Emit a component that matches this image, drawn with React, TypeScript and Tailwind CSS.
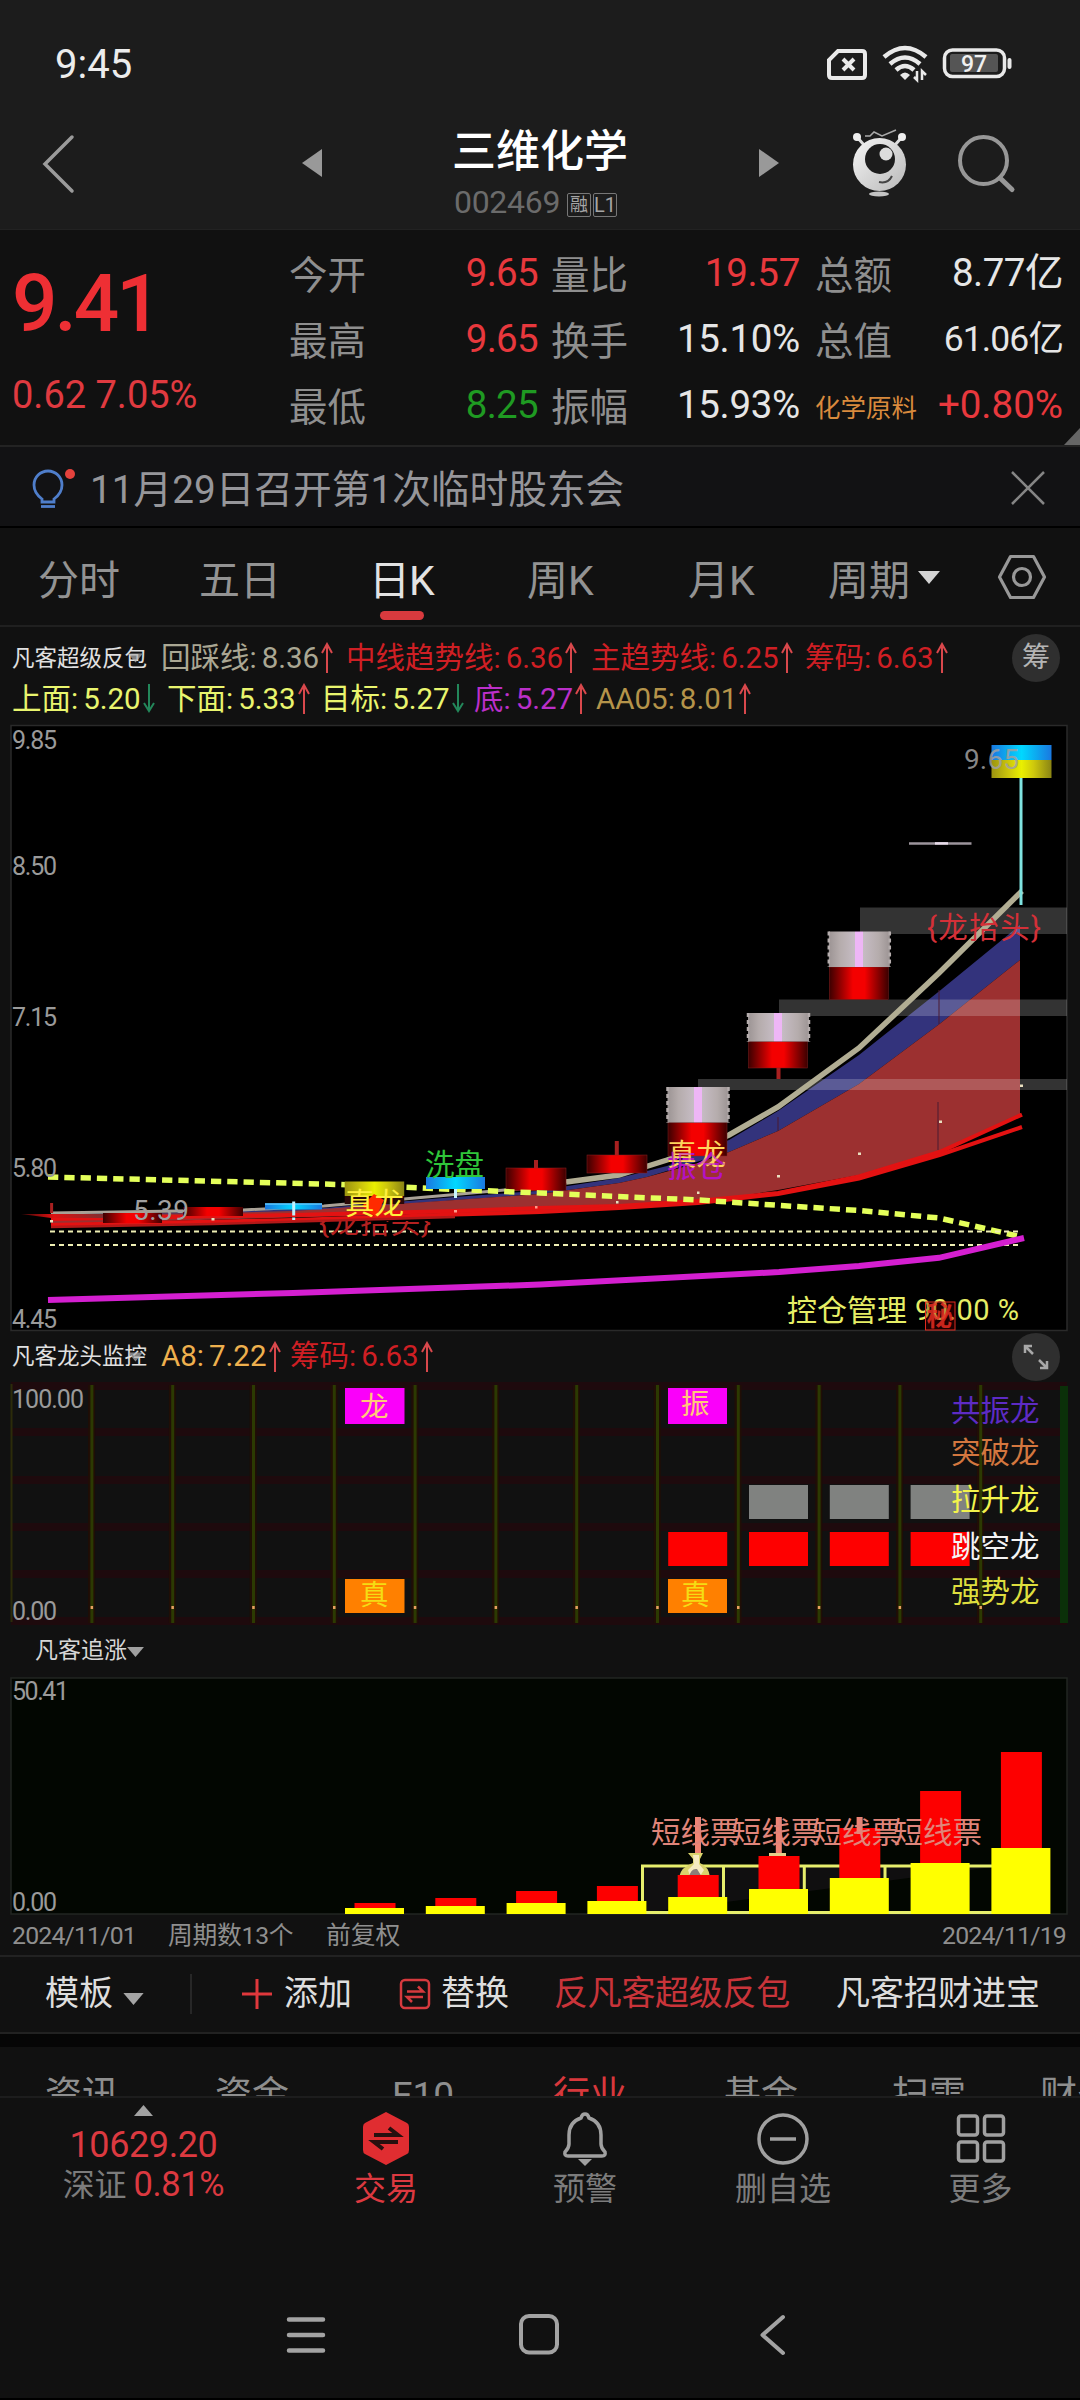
import type { ReactNode } from "react";

const STEP = 80.8;

const quotes = [
  [
    { label: "今开", value: "9.65", color: "text-[#e8383d]" },
    { label: "最高", value: "9.65", color: "text-[#e8383d]" },
    { label: "最低", value: "8.25", color: "text-[#1f9a22]" },
  ],
  [
    { label: "量比", value: "19.57", color: "text-[#e8383d]" },
    { label: "换手", value: "15.10%", color: "text-[#e6e6e6]" },
    { label: "振幅", value: "15.93%", color: "text-[#e6e6e6]" },
  ],
];

const mainIndicators = [
  { label: "回踩线", value: "8.36", color: "text-[#aaa793]", up: true, width: "w-[185px]" },
  { label: "中线趋势线", value: "6.36", color: "text-[#cf1f24]", up: true, width: "w-[245px]" },
  { label: "主趋势线", value: "6.25", color: "text-[#cf1f24]", up: true, width: "w-[214px]" },
  { label: "筹码", value: "6.63", color: "text-[#cf1f24]", up: true, width: "w-[160px]" },
];

const subIndicators = [
  { label: "上面", value: "5.20", color: "text-[#e9f56e]", up: false, width: "w-[155px]" },
  { label: "下面", value: "5.33", color: "text-[#e9f56e]", up: true, width: "w-[154px]" },
  { label: "目标", value: "5.27", color: "text-[#e9f56e]", up: false, width: "w-[153px]" },
  { label: "底", value: "5.27", color: "text-[#bb2fc9]", up: true, width: "w-[122px]" },
  { label: "AA05", value: "8.01", color: "text-[#b5944a]", up: true, width: "w-[170px]" },
];

const dragonIndicators = [
  { label: "A8", value: "7.22", color: "text-[#eeb04e]", up: true, width: "w-[129px]" },
  { label: "筹码", value: "6.63", color: "text-[#cf1f24]", up: true, width: "w-[160px]" },
];

type Indicator = (typeof mainIndicators)[number];

function Arrow({ up }: { up: boolean }) {
  return (
    <svg width="14" height="32" viewBox="0 0 14 32" fill="none" strokeWidth="2" className="ml-px shrink-0">
      {up ? (
        <path d="M7 31V2M2 11L7 2L12 11" stroke="#d9484c" />
      ) : (
        <path d="M7 1V28M2 20L7 28L12 20" stroke="#23875a" />
      )}
    </svg>
  );
}

function IndicatorItem({ item }: { item: Indicator }) {
  return (
    <div className={`flex shrink-0 items-center text-[29.5px] ${item.color} ${item.width}`}>
      <span>{item.label}:</span>
      <span className="ml-[5px]">{item.value}</span>
      <Arrow up={item.up} />
    </div>
  );
}

function Caret({ className }: { className: string }) {
  return (
    <svg viewBox="0 0 22 13" className={className}>
      <path d="M0 0H22L11 13Z" fill="currentColor" />
    </svg>
  );
}

function StatusBar() {
  return (
    <div className="flex h-[100px] items-end justify-between pr-[68px] pl-[55px]">
      <span className="mb-[12px] text-[40px] leading-[46px] text-[#ececec]">9:45</span>
      <svg width="186" height="44" viewBox="826 42 186 44" className="mb-[14px]" fill="none" stroke="#e9e9e9">
        <path d="M838 51H862Q865 51 865 54V75Q865 78 862 78H832Q829 78 829 75V60Z" strokeWidth="4" />
        <path d="M843 59L854 70M854 59L843 70" strokeWidth="4" />
        <path d="M884 57Q905 39 926 57M890 64Q905 51 920 64M896 70Q905 62 914 70" strokeWidth="4.5" />
        <path d="M900 75Q905 70 910 75L905 80Z" fill="#e9e9e9" stroke="none" />
        <path d="M917 71V80L914 77M922 80V71L926 75" strokeWidth="2.5" />
        <rect x="944.5" y="50" width="60" height="26.5" rx="8" strokeWidth="3.5" />
        <rect x="950" y="54" width="48" height="18" rx="2" fill="#555" stroke="none" />
        <path d="M1009.5 60V67" strokeWidth="4" strokeLinecap="round" />
        <text x="974" y="72" fontSize="23" fontWeight="500" textAnchor="middle" fill="#f0f0f0" stroke="none">
          97
        </text>
      </svg>
    </div>
  );
}

function Robot() {
  return (
    <svg width="60" height="72" viewBox="849 128 60 72" fill="none">
      <defs>
        <linearGradient id="robot" x1="0" y1="0" x2="1" y2="1">
          <stop offset="0" stopColor="#f5f5f5" />
          <stop offset="1" stopColor="#b9b9b9" />
        </linearGradient>
      </defs>
      <path d="M857 137L864 145M902 137L895 145" stroke="#ddd" strokeWidth="3" />
      <circle cx="857" cy="137" r="4" fill="#eee" />
      <circle cx="902" cy="137" r="4" fill="#eee" />
      <path d="M865 136L870 136L874 132L882 136L896 130" stroke="#aaa" strokeWidth="1.5" />
      <circle cx="879.5" cy="164.5" r="26.5" fill="url(#robot)" />
      <circle cx="880" cy="159" r="15" fill="#1c1c1c" />
      <circle cx="886" cy="154" r="6.5" fill="#dcdcdc" />
      <path d="M879 182Q888 184 892 176" stroke="#444" strokeWidth="2" />
      <ellipse cx="879" cy="194" rx="10" ry="2.5" fill="#c4c4c4" />
    </svg>
  );
}

function Header() {
  return (
    <div className="flex h-[130px] items-start pl-[42px] *:shrink-0">
      <svg width="34" height="60" viewBox="0 0 34 60" className="mt-[34px]" fill="none" stroke="#9b9b9b" strokeWidth="3.5">
        <path d="M30 3L3 30L30 57" strokeLinecap="round" />
      </svg>
      <svg width="20" height="28" viewBox="0 0 20 28" className="mt-[49px] ml-[226px]">
        <path d="M20 0V28L0 14Z" fill="#999" />
      </svg>
      <div className="ml-[108px] flex w-[220px] flex-col items-center pt-[24px]">
        <h1 className="text-[44px] leading-[56px] font-medium text-white">三维化学</h1>
        <div className="mt-[4px] flex w-[172px] items-center text-[#6b6b6b]">
          <span className="w-[108px] text-[32px] leading-[36px] tracking-[-0.3px]">002469</span>
          <span className="mt-[5px] ml-[5px] flex h-[24px] w-[24px] items-center justify-center rounded-[2px] border border-[#777] text-[18px] leading-none text-[#a5a5a5]">
            融
          </span>
          <span className="mt-[5px] ml-[2px] flex h-[24px] w-[24px] items-center justify-center rounded-[2px] border border-[#777] text-[20px] leading-none text-[#a5a5a5]">
            L1
          </span>
        </div>
      </div>
      <svg width="20" height="28" viewBox="0 0 20 28" className="mt-[49px] ml-[109px]">
        <path d="M0 0V28L20 14Z" fill="#999" />
      </svg>
      <div className="mt-[28px] ml-[70px]">
        <Robot />
      </div>
      <svg width="64" height="62" viewBox="954 132 64 62" className="mt-[32px] ml-[45px]" fill="none" stroke="#979797" strokeWidth="4">
        <circle cx="983.5" cy="160.5" r="23.5" />
        <path d="M1000 178L1012 189.5" strokeWidth="5" strokeLinecap="round" />
      </svg>
    </div>
  );
}

function QuotePanel() {
  return (
    <div className="relative flex h-[217px] border-b-2 border-[#232323] bg-[#111111]">
      <div className="flex w-[289px] flex-col pt-[27px] pl-[12px] text-[#ee2f34]">
        <span className="text-[80px] leading-[94px] font-medium tracking-[-3px]">9.41</span>
        <span className="mt-[21px] text-[38px] leading-[46px] whitespace-nowrap text-[#e03a40]">0.62 7.05%</span>
      </div>
      <div className="flex w-[249px] flex-col pt-[13px]">
        {quotes[0].map((q) => (
          <div key={q.label} className="flex h-[66px] items-center justify-between text-[38.5px]">
            <span className="text-[#8f8f8f]">{q.label}</span>
            <span className={`mb-1.5 tracking-[-0.7px] ${q.color}`}>{q.value}</span>
          </div>
        ))}
      </div>
      <div className="ml-[13px] flex w-[249px] flex-col pt-[13px]">
        {quotes[1].map((q) => (
          <div key={q.label} className="flex h-[66px] items-center justify-between text-[38.5px]">
            <span className="text-[#8f8f8f]">{q.label}</span>
            <span className={`mb-1.5 tracking-[-0.3px] ${q.color}`}>{q.value}</span>
          </div>
        ))}
      </div>
      <div className="ml-[15px] flex w-[248px] flex-col pt-[13px] text-[38.5px] text-[#e6e6e6]">
        <div className="flex h-[66px] items-center justify-between">
          <span className="text-[#8f8f8f]">总额</span>
          <span className="mb-1.5 tracking-[-0.5px]">8.77亿</span>
        </div>
        <div className="flex h-[66px] items-center justify-between">
          <span className="text-[#8f8f8f]">总值</span>
          <span className="mb-1 text-[35.5px] tracking-[-0.9px]">61.06亿</span>
        </div>
        <div className="flex h-[66px] items-center justify-between">
          <span className="text-[25.5px] text-[#d98a3d]">化学原料</span>
          <span className="mb-1.5 text-[#e8383d]">+0.80%</span>
        </div>
      </div>
      <svg width="16" height="17" className="absolute right-0 bottom-0">
        <path d="M16 0V17H0Z" fill="#666" />
      </svg>
    </div>
  );
}

function Notice() {
  return (
    <div className="flex h-[81px] items-center border-b-2 border-black bg-[#121214] pt-[2px] pr-[34px] pl-[30px]">
      <svg width="48" height="50" viewBox="30 460 48 50" fill="none" stroke="#4f7ecb" strokeWidth="2.8">
        <path d="M42 496Q34 490 34 482A14 14 0 0 1 62 482Q62 490 54 496V499H42Z" />
        <path d="M41 503.5H55" />
        <circle cx="70" cy="471" r="5" fill="#e5423d" stroke="none" />
      </svg>
      <span className="mt-[6px] ml-[12px] text-[38.7px] text-[#96969a]">11月29日召开第1次临时股东会</span>
      <svg width="36" height="36" viewBox="0 0 36 36" className="ml-auto" stroke="#858585" strokeWidth="2.5">
        <path d="M2 2L34 34M34 2L2 34" />
      </svg>
    </div>
  );
}

function PeriodTabs() {
  return (
    <div className="flex h-[99px] border-b-2 border-[#202020] pt-[21px] text-[41px] leading-[64px] text-[#939393]">
      <span className="ml-[38px] w-[161px]">分时</span>
      <span className="w-[170px]">五日</span>
      <div className="flex w-[158px] flex-col">
        <span className="tracking-[-1px] text-[#e3e3e3]">日K</span>
        <span className="mt-[-2px] ml-[11px] h-[9px] w-[44px] rounded-full bg-[#d93a3e]" />
      </div>
      <span className="w-[161px]">周K</span>
      <span className="w-[140px]">月K</span>
      <span>周期</span>
      <Caret className="mt-[22px] ml-[8px] h-[13px] w-[22px] text-[#d4d4d4]" />
      <svg width="50" height="46" viewBox="0 0 50 46" className="mt-[5px] ml-[57px]" fill="none" stroke="#989898" strokeWidth="3.2">
        <path d="M13.500 2.500H36.500L47.500 23L36.500 43.500H13.500L2.500 23Z" strokeLinejoin="round" />
        <circle cx="25" cy="23" r="8.5" />
      </svg>
    </div>
  );
}

function RoundButton({ children }: { children: ReactNode }) {
  return (
    <div className="flex h-[48px] w-[48px] items-center justify-center rounded-full bg-[#2f2f2f] text-[28px] text-[#b5b5b5]">
      {children}
    </div>
  );
}

function IndicatorBar() {
  return (
    <div className="h-[95px] leading-[42px] whitespace-nowrap">
      <div className="flex h-[50px] items-center pt-[11px] pl-[12px]">
        <div className="flex w-[149px] items-center text-[22.5px] text-[#e0e0e0]">
          凡客超级反包
          <Caret className="-ml-[19px] h-[10px] w-[15px] shrink-0 text-[#b0b0b0]/70" />
        </div>
        {mainIndicators.map((item) => (
          <IndicatorItem key={item.label} item={item} />
        ))}
        <div className="ml-[47px]">
          <RoundButton>筹</RoundButton>
        </div>
      </div>
      <div className="flex h-[44px] items-center pl-[12px]">
        {subIndicators.map((item) => (
          <IndicatorItem key={item.label} item={item} />
        ))}
      </div>
    </div>
  );
}

// limit-up candles: silver cap on top of a red body
const limitUp = [
  { x: 698, top: 1087, mid: 1122.5, bottom: 1156 },
  { x: 778.5, top: 1013, mid: 1041.5, bottom: 1068 },
  { x: 859.3, top: 931.5, mid: 967, bottom: 999.5 },
];

function MainChart() {
  return (
    <svg width="1080" height="612" viewBox="0 722 1080 612" className="block shrink-0">
      <defs>
        <linearGradient id="redBody">
          <stop offset="0" stopColor="#3c0000" />
          <stop offset="0.4" stopColor="#f40000" />
          <stop offset="0.6" stopColor="#f40000" />
          <stop offset="1" stopColor="#3c0000" />
        </linearGradient>
        <linearGradient id="blueBody">
          <stop offset="0" stopColor="#1a78e0" />
          <stop offset="0.5" stopColor="#00d8ff" />
          <stop offset="1" stopColor="#1a78e0" />
        </linearGradient>
        <linearGradient id="yellowBody">
          <stop offset="0" stopColor="#9b9310" />
          <stop offset="0.3" stopColor="#cfc90c" />
          <stop offset="0.5" stopColor="#eaf000" />
          <stop offset="0.7" stopColor="#cfc90c" />
          <stop offset="1" stopColor="#8a8414" />
        </linearGradient>
        <linearGradient id="silver">
          <stop offset="0" stopColor="#9c9494" />
          <stop offset="0.18" stopColor="#b5acac" />
          <stop offset="0.43" stopColor="#c6bcc4" />
          <stop offset="0.43" stopColor="#eeb6f6" />
          <stop offset="0.56" stopColor="#eeb6f6" />
          <stop offset="0.56" stopColor="#c6bcc4" />
          <stop offset="0.82" stopColor="#b5acac" />
          <stop offset="1" stopColor="#9c9494" />
        </linearGradient>
        <linearGradient id="wing">
          <stop offset="0" stopColor="#400808" />
          <stop offset="0.4" stopColor="#e01010" />
          <stop offset="1" stopColor="#803030" />
        </linearGradient>
      </defs>
      <rect x="11" y="725.5" width="1056" height="605" fill="#000" stroke="#2a2a2a" strokeWidth="1.5" />

      {/* trend bands */}
      <path
        d="M51 1214L213 1212L324 1208L455 1197L536 1191L619 1178L667 1166L698 1153L729 1140L778 1111L859 1055L939.500 991L1020 925L1020 960L939.500 1024L859 1084L778 1131L729 1152L647 1177L619 1183L540 1194L293 1212L51 1218Z"
        fill="#33337c"
      />
      <path
        d="M51 1215L213 1213L293 1211L455 1200L540 1194L619 1183L647 1177L698 1163L729 1152L778 1131L859 1084L939.500 1024L1020 960V1115L939.500 1151L859 1175L778 1190L698 1203L540 1211L51 1224Z"
        fill="#9c3030"
      />

      {/* gap zones */}
      <g fill="#fff" fillOpacity="0.2">
        <rect x="860" y="907.5" width="207" height="26.5" />
        <rect x="779" y="999.5" width="288" height="16.5" />
        <rect x="698" y="1079" width="369" height="11" />
      </g>

      <path
        d="M51 1213L243 1210L324 1206L455 1194.500L516 1189L566 1181.500L619 1174.700L667 1160L698 1149"
        fill="none"
        stroke="#a9a196"
        strokeWidth="3"
      />
      <path
        d="M566 1182L619 1175L667 1160L698 1149L729 1135L778 1107L859 1048L939 973L1022 891"
        fill="none"
        stroke="#b1ad93"
        strokeWidth="5.5"
      />

      <g fill="none" stroke="#e31212">
        <path
          d="M51 1219L293 1215L455 1211L540 1208L619 1206L698 1201L778 1193L859 1176.500L939.500 1152L1022 1114.600"
          strokeWidth="4"
        />
        <path
          d="M51 1225L293 1220L455 1214.500L540 1212L619 1208L698 1203L778 1194L859 1178.500L939.500 1155L1022 1127"
          strokeWidth="4"
        />
        <path d="M51 1227L213 1224L455 1217" strokeWidth="2.5" stroke="#b31818" />
        <path d="M778 1131V1117M939 1024V990M938 1150V1102" strokeWidth="1" stroke="#4a1a30" />
      </g>

      {/* candles */}
      <path d="M21 1214H103V1218H51Z" fill="url(#wing)" />
      <path d="M51.600 1203V1213" stroke="#a82020" strokeWidth="3" />
      <rect x="103" y="1213" width="59" height="10" fill="url(#redBody)" />
      <rect x="183" y="1207" width="60" height="9" fill="url(#redBody)" />
      <rect x="265" y="1203.5" width="57" height="6" fill="url(#blueBody)" />
      <path d="M265 1204H322" stroke="#5cc8ff" strokeWidth="1.5" />
      <path d="M293.700 1201.500V1220" stroke="#bff2ff" strokeWidth="3" strokeDasharray="14 2" />
      <rect x="506" y="1168" width="60" height="22.5" fill="url(#redBody)" stroke="#902020" strokeWidth="0.5" />
      <path d="M536 1160V1168" stroke="#a82020" strokeWidth="4" />
      <rect x="587" y="1155" width="60" height="18" fill="url(#redBody)" stroke="#902020" strokeWidth="0.5" />
      <path d="M616.800 1141V1155" stroke="#a82020" strokeWidth="4" />
      <path d="M778.500 1068V1079" stroke="#a82020" strokeWidth="4" />
      {limitUp.map((c) => (
        <g key={c.x}>
          <rect x={c.x - 30} y={c.mid} width="59" height={c.bottom - c.mid} fill="url(#redBody)" stroke="#802020" strokeWidth="0.5" />
          <rect x={c.x - 30.5} y={c.top} width="61" height={c.mid - c.top} fill="url(#silver)" />
          <path
            d={`M${c.x - 30.5} ${c.top}V${c.mid}M${c.x + 30.5} ${c.top}V${c.mid}`}
            stroke="#b5adad"
            strokeWidth="2.5"
            strokeDasharray="4 3"
          />
        </g>
      ))}
      <path d="M909 843.400H971.500" stroke="#9c949c" strokeWidth="2.5" />
      <path d="M935 843.400H948" stroke="#e8dcea" strokeWidth="2.5" />
      <path d="M1021 778V905" stroke="#7fe3e0" strokeWidth="3" />
      <rect x="991.5" y="745" width="60" height="15" fill="url(#blueBody)" />
      <rect x="991.5" y="760" width="60" height="18" fill="url(#yellowBody)" />

      {/* dashed levels */}
      <path
        d="M48 1177L340 1184.500L540 1193L698 1200L781 1205.500L859 1210.500L939 1218L1022 1237"
        fill="none"
        stroke="#e4ff5a"
        strokeWidth="5.5"
        strokeDasharray="10.3 6"
      />
      <path d="M50 1231.600H1022M50 1245H1022" stroke="#efefb4" strokeWidth="2" strokeDasharray="5 4" />
      <path d="M48 1300L293 1293L540 1284.600L779 1272L859 1266L939 1257.800L1024 1238" fill="none" stroke="#d41fd0" strokeWidth="6" />

      <rect x="344.7" y="1181.5" width="59.5" height="14.5" fill="url(#yellowBody)" />
      <rect x="344.7" y="1196" width="59.5" height="8" fill="#2a0808" />
      <path d="M374 1194L384 1200L376 1217L362 1206Z" fill="#ff2a00" />
      <rect x="426" y="1177" width="59" height="12" fill="url(#blueBody)" />
      <path d="M455.500 1189V1198" stroke="#c8f4ff" strokeWidth="3" />
      <g fill="#e9e0c0">
        <rect x="50" y="1220" width="3" height="2.5" />
        <rect x="211.5" y="1218" width="3" height="2.5" />
        <rect x="535" y="1206" width="2.5" height="2.5" fill="#ff9a8a" />
        <rect x="454" y="1210" width="3" height="2.5" fill="#ff9a8a" />
        <rect x="616" y="1201" width="2.5" height="2.5" />
        <rect x="697" y="1191.5" width="2.5" height="2.5" />
        <rect x="777" y="1175" width="3" height="2.5" />
        <rect x="858" y="1152.5" width="3" height="2.5" />
        <rect x="939" y="1120.5" width="3" height="2.5" />
        <rect x="1020" y="1084.5" width="3" height="2.5" />
      </g>

      {/* axis labels */}
      <g fill="#9a9a9a" fontSize="25">
        <text x="12" y="748.5" textLength="45">9.85</text>
        <text x="12" y="875" textLength="45">8.50</text>
        <text x="12" y="1026" textLength="45">7.15</text>
        <text x="12" y="1177" textLength="45">5.80</text>
        <text x="12" y="1328" textLength="45">4.45</text>
      </g>
      <g fontSize="28" fill="#a0a0a0">
        <text x="133" y="1220" textLength="56">5.39</text>
        <text x="964" y="769" textLength="55" fillOpacity="0.85">9.65</text>
      </g>

      {/* signals */}
      <clipPath id="lower">
        <rect x="310" y="1221" width="130" height="20" />
      </clipPath>
      <g fontSize="29.5">
        <text x="425" y="1175" fill="#2fc63a">洗盘</text>
        <text x="319" y="1233" fill="#b32020" clipPath="url(#lower)" textLength="112">{"{龙抬头}"}</text>
        <text x="345" y="1214" fill="#fff03c">真龙</text>
        <text x="667" y="1177" fill="#b512c4">振仓</text>
        <text x="667" y="1165" fill="#ffd45c">真龙</text>
        <text x="667" y="1177" fill="#b512c4" fillOpacity="0.5">振仓</text>
        <text x="927" y="938" fill="#d43038" textLength="114">{"{龙抬头}"}</text>
      </g>
      <g fontSize="30" fill="#e6ee66">
        <text x="787" y="1321">控仓管理</text>
        <text x="915" y="1320" fontSize="29" textLength="104">90.00 %</text>
      </g>
      <rect x="925.5" y="1302" width="29.5" height="28" fill="#500" fillOpacity="0.35" stroke="#e02a20" strokeWidth="1" />
      <text x="926.5" y="1326" fontSize="27" fontWeight="700" fill="#e82c22" fillOpacity="0.85">秘</text>
    </svg>
  );
}

const dragonLegend = [
  { name: "共振龙", y: 1421, color: "#5d2bc4" },
  { name: "突破龙", y: 1463, color: "#d3773f" },
  { name: "拉升龙", y: 1510, color: "#f2f24c" },
  { name: "跳空龙", y: 1557, color: "#f4f4f4" },
  { name: "强势龙", y: 1602, color: "#dede3e" },
];

function DragonChart() {
  const cols = Array.from({ length: 12 }, (_, i) => 91.6 + i * STEP);
  return (
    <svg width="1080" height="250" viewBox="0 1380 1080 250" className="block shrink-0">
      {[1386, 1432, 1480, 1527, 1574, 1621].map((y) => (
        <rect key={y} x="11" y={y - 4} width="1056" height="8" fill="#1e0a0d" />
      ))}
      {cols.map((x) => (
        <g key={x}>
          <rect x={x - 3.5} y="1385" width="7" height="238" fill="#200e06" />
          <rect x={x - 1.2} y="1385" width="3" height="238" fill="#2c3a02" />
          <rect x={x - 1} y="1606" width="2.5" height="3" fill="#e8a060" />
        </g>
      ))}
      <rect x="10.5" y="1384" width="2" height="238" fill="#2c2c0a" />
      <rect x="1060" y="1386" width="8" height="237" fill="#0b3009" />
      {[0, 1, 2].map((i) => (
        <rect key={i} x={749 + i * STEP} y="1485" width="59" height="34" fill="#808280" />
      ))}
      {[0, 1, 2, 3].map((i) => (
        <rect key={i} x={668.2 + i * STEP} y="1532" width="59" height="34" fill="#fe0000" />
      ))}
      <g>
        <rect x="345" y="1388" width="59.5" height="36" fill="#fa00fa" />
        <rect x="668" y="1388" width="59" height="36" fill="#fa00fa" />
        <rect x="345" y="1579" width="59.5" height="34" fill="#ff8000" />
        <rect x="668" y="1579" width="59" height="34" fill="#ff8000" />
      </g>
      <g fontSize="28.5">
        <text x="360" y="1417" fill="#ffc878">龙</text>
        <text x="681" y="1414" fill="#ffc878">振</text>
        <text x="360" y="1605" fill="#f5dc14">真</text>
        <text x="681" y="1605" fill="#f5dc14">真</text>
      </g>
      <g fontSize="29.5">
        {dragonLegend.map((d) => (
          <text key={d.name} x="951" y={d.y} fill={d.color}>
            {d.name}
          </text>
        ))}
      </g>
      <g fontSize="25" fill="#9a9a9a">
        <text x="12" y="1408" textLength="72">100.00</text>
        <text x="12" y="1620" textLength="45">0.00</text>
      </g>
    </svg>
  );
}

const bars = [
  { red: 1903, yellow: 1908 },
  { red: 1898, yellow: 1906 },
  { red: 1891, yellow: 1903 },
  { red: 1886, yellow: 1901 },
  { red: 1875, yellow: 1897 },
  { red: 1856, yellow: 1889 },
  { red: 1828, yellow: 1878 },
  { red: 1791, yellow: 1863 },
  { red: 1752, yellow: 1848 },
];

function ChaseChart() {
  return (
    <svg width="1080" height="244" viewBox="0 1673 1080 244" className="block shrink-0">
      <rect x="11" y="1678" width="1056" height="236" fill="#020601" stroke="#222622" strokeWidth="1.5" />
      <path
        d="M642.500 1913V1866H1000M723.500 1866V1913M804.300 1866V1913M885 1866V1913M642 1912.500H1000"
        fill="#100f10"
        stroke="#e6ee6c"
        strokeWidth="3"
      />
      <path d="M688 1853H703L700 1859L700 1863Q709 1867 710 1877H679Q681 1867 693 1863L693 1859Z" fill="#d9d36c" />
      <path d="M693 1855H699V1864L704 1870L700 1876H690L688 1870L694 1864Z" fill="#f6ecc0" />
      <path d="M689 1877Q691 1868 697 1869L702 1877Z" fill="#8a8078" />
      <rect x="769" y="1853" width="17" height="4" fill="#e6d08a" />
      {bars.map((b, i) => (
        <g key={i}>
          <rect x={354.5 + i * STEP} y={b.red} width="41" height={1914 - b.red} fill="#fd0000" />
          <rect x={345 + i * STEP} y={b.yellow} width="59" height={1914 - b.yellow} fill="#ffff00" />
        </g>
      ))}
      <path d="M698 1817V1853M778.800 1817V1853M859.600 1817V1834" stroke="#f08474" strokeWidth="6" />
      <g fontSize="29.5" fill="#e0857a">
        {[0, 1, 2, 3].map((i) => (
          <text key={i} x={651 + i * STEP} y="1843">
            短线票
          </text>
        ))}
      </g>
      <g fontSize="25" fill="#9a9a9a">
        <text x="12" y="1700" textLength="57">50.41</text>
        <text x="12" y="1911" textLength="45">0.00</text>
      </g>
    </svg>
  );
}

function Toolbar() {
  return (
    <div className="flex h-[79px] shrink-0 items-center border-y-2 border-[#222] pb-[2px] text-[34px] whitespace-nowrap text-[#dedede]">
      <span className="ml-[45px]">模板</span>
      <Caret className="mt-[10px] ml-[10px] h-[12px] w-[21px] text-[#a5a5a5]" />
      <span className="ml-[46px] h-[40px] w-[2px] bg-[#272727]" />
      <svg width="30" height="30" viewBox="0 0 30 30" className="ml-[50px]" stroke="#e0383c" strokeWidth="3">
        <path d="M15 0V30M0 15H30" />
      </svg>
      <span className="ml-[12px]">添加</span>
      <svg width="32" height="32" viewBox="0 0 32 32" className="ml-[47px]" fill="none" stroke="#d63a3e" strokeWidth="2.5">
        <rect x="2" y="2" width="28" height="28" rx="4" />
        <path d="M8 13.500H24L19 8.500M24 19H8L13 24" />
      </svg>
      <span className="ml-[10px]">替换</span>
      <span className="ml-[45px] tracking-[-0.3px] text-[#c9343a]">反凡客超级反包</span>
      <span className="ml-[46px]">凡客招财进宝</span>
    </div>
  );
}

const infoTabs = [
  { name: "资讯", width: "w-[170px]" },
  { name: "资金", width: "w-[177px]" },
  { name: "F10", width: "w-[161px]" },
  { name: "行业", width: "w-[171px]" },
  { name: "基金", width: "w-[168px]" },
  { name: "扫雷", width: "w-[148px]" },
  { name: "财务", width: "w-[80px]" },
];

function BottomBar() {
  return (
    <div className="flex h-[139px] shrink-0 border-t-2 border-[#1d1d1d] pt-[7px] text-[32px] leading-[42px] text-[#7c7c7c]">
      <div className="flex w-[287px] flex-col items-center">
        <svg width="19" height="11" viewBox="0 0 19 11">
          <path d="M0 11L9.500 0L19 11Z" fill="#a2a2a2" />
        </svg>
        <span className="mt-[9px] text-[36px] leading-[40px] tracking-[-0.4px] text-[#dc3940]">10629.20</span>
        <span className="leading-[38px] tracking-[-0.4px] whitespace-nowrap">
          深证 <span className="text-[34.5px] text-[#dc3940]">0.81%</span>
        </span>
      </div>
      <div className="flex w-[198px] flex-col items-center">
        <svg width="50" height="58" viewBox="361 2110 50 58" className="mt-[5px]">
          <path d="M386 2112L407 2123Q409 2124 409 2127V2150Q409 2153 407 2154L386 2165L365 2154Q363 2153 363 2150V2127Q363 2124 365 2123Z" fill="#e02d31" />
          <path d="M374 2135H398L389 2128M398 2142H374L383 2149" fill="none" stroke="#28100f" strokeWidth="4" />
        </svg>
        <span className="text-[#dc3940]">交易</span>
      </div>
      <div className="flex w-[200px] flex-col items-center">
        <svg width="50" height="58" viewBox="560 2110 50 58" className="mt-[5px]" fill="none" stroke="#a0a0a0" strokeWidth="3.5">
          <path d="M585 2114Q588 2114 589 2118Q601 2122 601 2135V2144Q601 2148 605 2152Q606 2156 602 2156H568Q564 2156 565 2152Q569 2148 569 2144V2135Q569 2122 581 2118Q582 2114 585 2114Z" />
          <path d="M578 2159H592L585 2166Z" fill="#a0a0a0" stroke="none" />
        </svg>
        <span>预警</span>
      </div>
      <div className="flex w-[196px] flex-col items-center">
        <svg width="54" height="58" viewBox="0 0 54 58" className="mt-[5px]" fill="none" stroke="#a0a0a0" strokeWidth="3.5">
          <circle cx="27" cy="29" r="24" />
          <path d="M14 29H40" />
        </svg>
        <span>删自选</span>
      </div>
      <div className="flex w-[199px] flex-col items-center">
        <svg width="54" height="58" viewBox="0 0 54 58" className="mt-[5px]" fill="none" stroke="#a0a0a0" strokeWidth="3.5">
          <rect x="4.5" y="6" width="19" height="19" rx="2.5" />
          <rect x="30.5" y="6" width="19" height="19" rx="2.5" />
          <rect x="4.5" y="32" width="19" height="19" rx="2.5" />
          <rect x="30.5" y="32" width="19" height="19" rx="2.5" />
        </svg>
        <span>更多</span>
      </div>
    </div>
  );
}

export default function App() {
  return (
    <div className="flex h-[2400px] w-[1080px] flex-col overflow-hidden bg-[#111111] font-['Roboto','Noto_Sans_CJK_SC',sans-serif]">
      <div className="h-[230px] shrink-0 border-b border-[#222] bg-[#1c1c1c]">
        <StatusBar />
        <Header />
      </div>
      <QuotePanel />
      <Notice />
      <PeriodTabs />
      <IndicatorBar />
      <MainChart />

      <div className="mt-[-1px] flex h-[47px] shrink-0 items-center pl-[12px] whitespace-nowrap">
        <div className="flex w-[149px] items-center text-[22.5px] text-[#e0e0e0]">
          凡客龙头监控
          <Caret className="-ml-[19px] h-[10px] w-[15px] shrink-0 text-[#b0b0b0]/70" />
        </div>
        {dragonIndicators.map((item) => (
          <IndicatorItem key={item.label} item={item} />
        ))}
        <div className="ml-[562px]">
          <RoundButton>
            <svg width="28" height="28" viewBox="0 0 28 28" fill="none" stroke="#a8a8a8" strokeWidth="2.5">
              <path d="M3 10V3H10M3 3L11 11M25 18V25H18M25 25L17 17" />
            </svg>
          </RoundButton>
        </div>
      </div>
      <DragonChart />

      <div className="flex h-[43px] shrink-0 items-center pl-[35px] text-[23px] text-[#d6d6d6]">
        凡客追涨
        <Caret className="h-[10px] w-[17px] text-[#a0a0a0]" />
      </div>
      <ChaseChart />
      <div className="flex h-[38px] shrink-0 items-center pr-[14px] pl-[12px] text-[24.8px] whitespace-nowrap text-[#8f8f8f]">
        <span className="w-[156px] tracking-[-0.8px]">2024/11/01</span>
        <span className="w-[158px] tracking-[-0.3px]">周期数13个</span>
        <span>前复权</span>
        <span className="ml-auto tracking-[-0.8px]">2024/11/19</span>
      </div>
      <Toolbar />
      <div className="h-[13px] shrink-0 bg-[#060606]" />
      <div className="flex h-[49px] shrink-0 overflow-hidden pt-[26px] pl-[45px] text-[37px] leading-[46px] whitespace-nowrap text-[#8e8e8e]">
        {infoTabs.map((t) => (
          <span key={t.name} className={`shrink-0 ${t.width} ${t.name === "行业" ? "text-[#d8383c]" : ""}`}>
            {t.name}
          </span>
        ))}
      </div>
      <BottomBar />

      <div className="flex flex-1 items-start pt-[76px] pl-[285px]">
        <svg width="500" height="48" viewBox="285 2311 500 48" fill="none" stroke="#a3a3a3" strokeLinecap="round">
          <path d="M289 2319.500H323M289 2335H323M289 2350.500H323" strokeWidth="4.5" />
          <rect x="521" y="2316" width="36" height="36.5" rx="8" strokeWidth="4" />
          <path d="M783 2317L762.500 2335L783 2353" strokeWidth="4" strokeLinejoin="round" />
        </svg>
      </div>
      <div className="h-[2px] shrink-0 bg-black" />
    </div>
  );
}
